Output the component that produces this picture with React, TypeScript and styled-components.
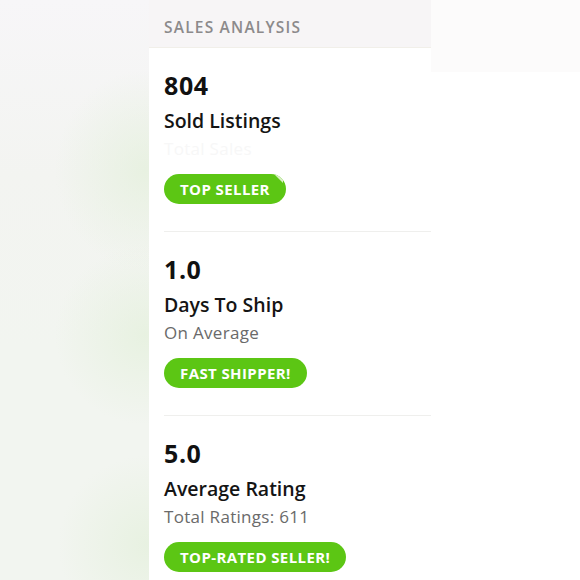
import React from "react";
import styled, { createGlobalStyle } from "styled-components";

const Global = createGlobalStyle`
  html, body { margin: 0; padding: 0; }
  body {
    width: 580px;
    height: 580px;
    overflow: hidden;
    font-family: "Open Sans", "Lato", sans-serif;
    background: #ffffff;
  }
`;

const Page = styled.div`
  display: flex;
  width: 580px;
  height: 580px;
  overflow: hidden;
`;

const LeftBackdrop = styled.div`
  width: 149px;
  flex: none;
  background:
    radial-gradient(ellipse 90px 100px at 145px 170px, rgba(228, 240, 220, 0.75), rgba(228, 240, 220, 0) 100%),
    radial-gradient(ellipse 90px 90px at 145px 335px, rgba(228, 240, 220, 0.75), rgba(228, 240, 220, 0) 100%),
    radial-gradient(ellipse 90px 90px at 148px 545px, rgba(228, 240, 220, 0.75), rgba(228, 240, 220, 0) 100%),
    linear-gradient(180deg, #f7f6f8 0%, #f3f4f1 30%, #f2f5f0 60%, #f2f5f0 100%);
`;

const RightBackdrop = styled.div`
  flex: 1;
  display: flex;
  flex-direction: column;
  background: #ffffff;
`;

const RightHeader = styled.div`
  height: 72px;
  background: #fcfbfb;
`;

const Panel = styled.div`
  width: 282px;
  flex: none;
  display: flex;
  flex-direction: column;
  background: #ffffff;
`;

const Header = styled.div`
  flex: none;
  height: 48px;
  box-sizing: border-box;
  padding: 18px 0 0 15px;
  background: #f7f5f6;
  border-bottom: 1px solid #f1efe9;
  font-size: 15.5px;
  font-weight: 600;
  letter-spacing: 1.2px;
  color: #8c8a8b;
  line-height: 18px;
`;

const Section = styled.div<{ $last?: boolean }>`
  flex: none;
  height: 184px;
  box-sizing: border-box;
  margin-left: 15px;
  padding-top: 24px;
  display: flex;
  flex-direction: column;
  align-items: flex-start;
  border-bottom: ${(p) => (p.$last ? "none" : "1px solid #efefed")};
`;

const Value = styled.div`
  font-size: 25px;
  font-weight: 700;
  color: #111;
  line-height: 26px;
  height: 26px;
  letter-spacing: 0.6px;
`;

const Label = styled.div`
  margin-top: 11px;
  font-size: 19.5px;
  font-weight: 600;
  color: #141414;
  line-height: 24px;
`;

const Sub = styled.div<{ $faded?: boolean }>`
  margin-top: 5px;
  font-size: 17px;
  font-weight: 400;
  color: ${(p) => (p.$faded ? "#f7f7f7" : "#6a6a6a")};
  line-height: 22px;
  letter-spacing: 0.3px;
`;

const Badge = styled.div`
  position: relative;
  margin-top: 14px;
  height: 30px;
  padding: 0 16px;
  display: flex;
  align-items: center;
  border-radius: 15px;
  background: #5cc614;
  color: #ffffff;
  font-size: 15px;
  font-weight: 700;
  letter-spacing: 0.4px;
  overflow: hidden;
`;

const Corner = styled.span`
  position: absolute;
  top: 0;
  right: 3px;
  width: 0;
  height: 0;
  border-top: 9px solid #d8f0c4;
  border-left: 9px solid transparent;
`;

const stats = [
  { value: "804", label: "Sold Listings", sub: "Total Sales", faded: true, badge: "TOP SELLER", corner: true },
  { value: "1.0", label: "Days To Ship", sub: "On Average", badge: "FAST SHIPPER!" },
  { value: "5.0", label: "Average Rating", sub: "Total Ratings: 611", badge: "TOP-RATED SELLER!" },
];

export default function App() {
  return (
    <>
      <Global />
      <Page>
        <LeftBackdrop />
        <Panel>
          <Header>SALES ANALYSIS</Header>
          {stats.map((s, i) => (
            <Section key={s.value} $last={i === stats.length - 1}>
              <Value>{s.value}</Value>
              <Label>{s.label}</Label>
              <Sub $faded={s.faded}>{s.sub}</Sub>
              <Badge>
                {s.badge}
                {s.corner && <Corner />}
              </Badge>
            </Section>
          ))}
        </Panel>
        <RightBackdrop>
          <RightHeader />
        </RightBackdrop>
      </Page>
    </>
  );
}
